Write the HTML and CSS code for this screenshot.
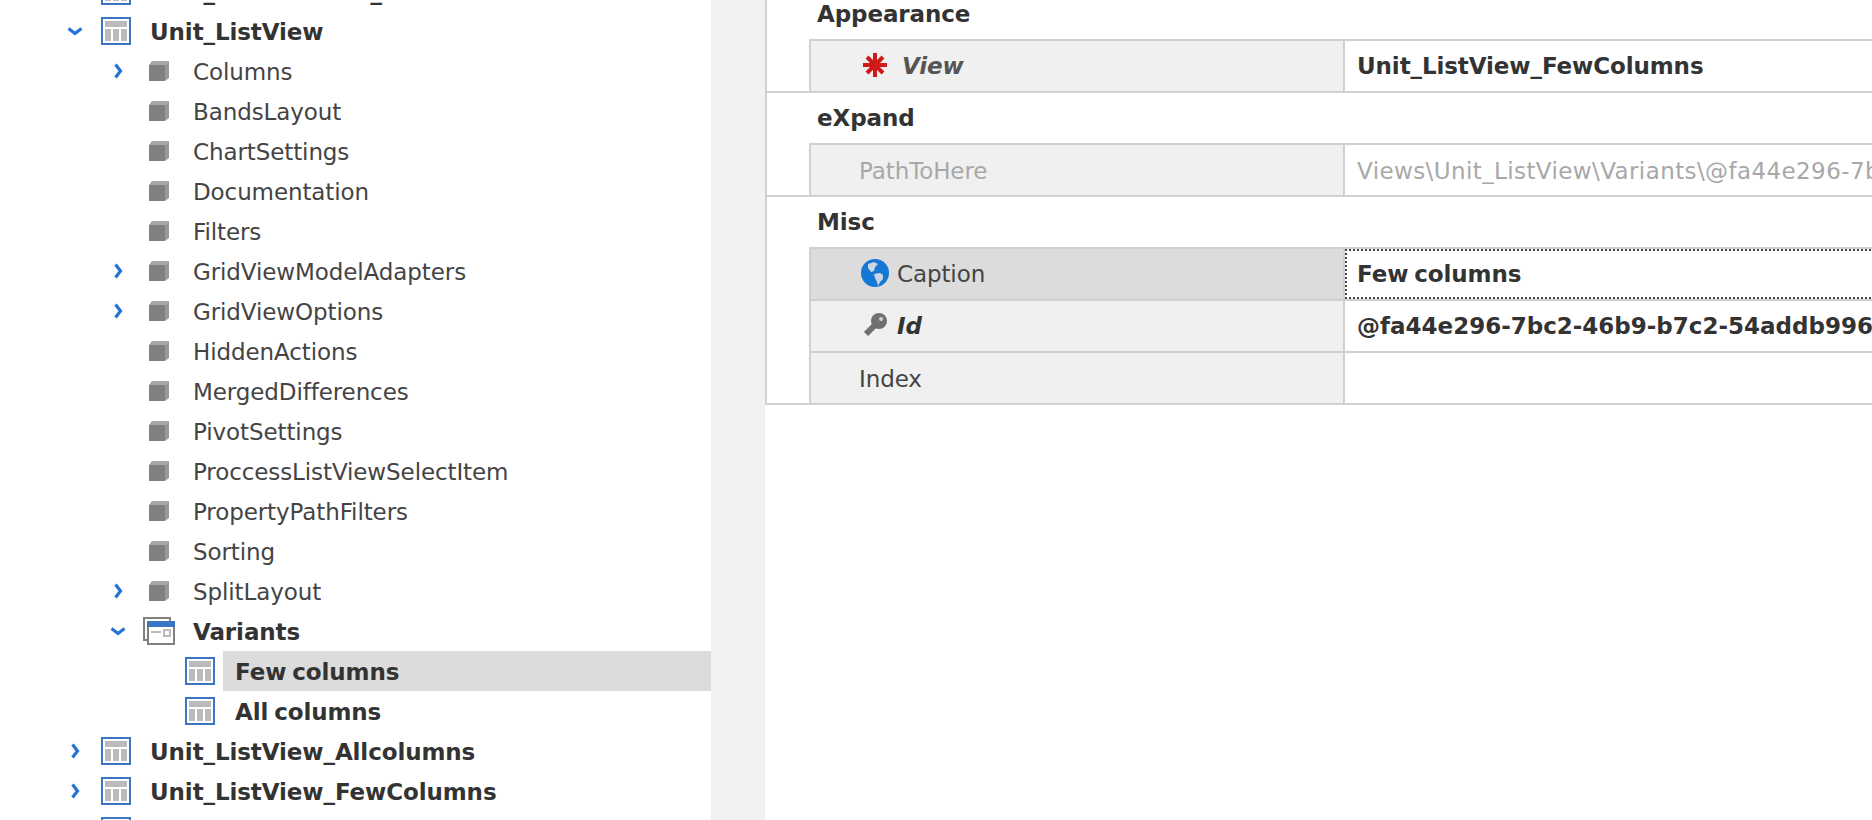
FILE: index.html
```html
<!DOCTYPE html>
<html lang="en">
<head>
  <meta charset="UTF-8">
  <meta name="viewport" content="width=device-width, initial-scale=1.0">
  <title>Model Editor</title>
  <link rel="stylesheet" href="styles.css">
</head>
<body>
  <svg class="defs" width="0" height="0">
    <symbol id="i-list" viewBox="0 0 30 28">
      <rect x="1" y="1" width="28" height="26" fill="#fff" stroke="#3b76c4" stroke-width="2"/>
      <path d="M4 4h22v6H4zM4 12h6v12H4zM12 12h6v12h-6zM20 12h6v12h-6z" fill="#bbb"/>
    </symbol>
    <symbol id="i-cube" viewBox="0 0 20 20">
      <path d="M0 4h16v16H0z" fill="#808080"/>
      <path d="M0 4l3-4h17l-4 4z" fill="#a6a6a6"/>
      <path d="M16 4l4-4v17l-4 3z" fill="#999"/>
    </symbol>
    <symbol id="i-right" viewBox="0 0 10 16">
      <path d="M2.500 1.500l5 6.500-5 6.500" fill="none" stroke="#2573d8" stroke-width="3.200"/>
    </symbol>
    <symbol id="i-down" viewBox="0 0 16 10">
      <path d="M1.500 2.500l6.500 5 6.500-5" fill="none" stroke="#2573d8" stroke-width="3.200"/>
    </symbol>
  </svg>

  <div class="page">
    <div class="tree">
      <div class="node lvl0"><span class="twist"><svg class="chev-r"><use href="#i-right"/></svg></span><span class="ico"><svg class="list"><use href="#i-list"/></svg></span><span class="label bold">Unit_Interactions_ListView</span></div>
      <div class="node lvl0"><span class="twist"><svg class="chev-d"><use href="#i-down"/></svg></span><span class="ico"><svg class="list"><use href="#i-list"/></svg></span><span class="label bold">Unit_ListView</span></div>
      <div class="node lvl1"><span class="twist"><svg class="chev-r"><use href="#i-right"/></svg></span><span class="ico"><svg class="cube"><use href="#i-cube"/></svg></span><span class="label">Columns</span></div>
      <div class="node lvl1"><span class="twist"></span><span class="ico"><svg class="cube"><use href="#i-cube"/></svg></span><span class="label">BandsLayout</span></div>
      <div class="node lvl1"><span class="twist"></span><span class="ico"><svg class="cube"><use href="#i-cube"/></svg></span><span class="label">ChartSettings</span></div>
      <div class="node lvl1"><span class="twist"></span><span class="ico"><svg class="cube"><use href="#i-cube"/></svg></span><span class="label">Documentation</span></div>
      <div class="node lvl1"><span class="twist"></span><span class="ico"><svg class="cube"><use href="#i-cube"/></svg></span><span class="label">Filters</span></div>
      <div class="node lvl1"><span class="twist"><svg class="chev-r"><use href="#i-right"/></svg></span><span class="ico"><svg class="cube"><use href="#i-cube"/></svg></span><span class="label">GridViewModelAdapters</span></div>
      <div class="node lvl1"><span class="twist"><svg class="chev-r"><use href="#i-right"/></svg></span><span class="ico"><svg class="cube"><use href="#i-cube"/></svg></span><span class="label">GridViewOptions</span></div>
      <div class="node lvl1"><span class="twist"></span><span class="ico"><svg class="cube"><use href="#i-cube"/></svg></span><span class="label">HiddenActions</span></div>
      <div class="node lvl1"><span class="twist"></span><span class="ico"><svg class="cube"><use href="#i-cube"/></svg></span><span class="label">MergedDifferences</span></div>
      <div class="node lvl1"><span class="twist"></span><span class="ico"><svg class="cube"><use href="#i-cube"/></svg></span><span class="label">PivotSettings</span></div>
      <div class="node lvl1"><span class="twist"></span><span class="ico"><svg class="cube"><use href="#i-cube"/></svg></span><span class="label">ProccessListViewSelectItem</span></div>
      <div class="node lvl1"><span class="twist"></span><span class="ico"><svg class="cube"><use href="#i-cube"/></svg></span><span class="label">PropertyPathFilters</span></div>
      <div class="node lvl1"><span class="twist"></span><span class="ico"><svg class="cube"><use href="#i-cube"/></svg></span><span class="label">Sorting</span></div>
      <div class="node lvl1"><span class="twist"><svg class="chev-r"><use href="#i-right"/></svg></span><span class="ico"><svg class="cube"><use href="#i-cube"/></svg></span><span class="label">SplitLayout</span></div>
      <div class="node lvl1"><span class="twist"><svg class="chev-d"><use href="#i-down"/></svg></span><span class="ico">
        <svg class="windows" viewBox="0 0 32 28">
          <rect x="1" y="1" width="26" height="22" fill="#fff" stroke="#808080" stroke-width="2"/>
          <rect x="5" y="5" width="26" height="22" fill="#fff" stroke="#808080" stroke-width="2"/>
          <rect x="4" y="4" width="28" height="6" fill="#3b76c4"/>
          <rect x="8" y="14" width="10" height="2" fill="#bbb"/>
          <rect x="21" y="13" width="6" height="6" fill="none" stroke="#bbb" stroke-width="2"/>
        </svg>
      </span><span class="label bold">Variants</span></div>
      <div class="node lvl2"><span class="twist"></span><span class="ico"><svg class="list"><use href="#i-list"/></svg></span><span class="label bold selected">Few columns</span></div>
      <div class="node lvl2"><span class="twist"></span><span class="ico"><svg class="list"><use href="#i-list"/></svg></span><span class="label bold">All columns</span></div>
      <div class="node lvl0"><span class="twist"><svg class="chev-r"><use href="#i-right"/></svg></span><span class="ico"><svg class="list"><use href="#i-list"/></svg></span><span class="label bold">Unit_ListView_Allcolumns</span></div>
      <div class="node lvl0"><span class="twist"><svg class="chev-r"><use href="#i-right"/></svg></span><span class="ico"><svg class="list"><use href="#i-list"/></svg></span><span class="label bold">Unit_ListView_FewColumns</span></div>
      <div class="node lvl0"><span class="twist"></span><span class="ico"><svg class="list"><use href="#i-list"/></svg></span><span class="label bold"></span></div>
    </div>

    <div class="strip"></div>

    <div class="grid">
      <div class="section">
        <div class="head">Appearance</div>
        <div class="props">
          <div class="prop">
            <div class="name name-view">
              <svg class="star" viewBox="0 0 24 24">
                <path d="M12 0v24M0 12h24M4 4l16 16M20 4L4 20" stroke="#d01a1a" stroke-width="4" fill="none"/>
                <circle cx="12" cy="12" r="5" fill="#d01a1a"/>
              </svg>
              <em>View</em>
            </div>
            <div class="value bold">Unit_ListView_FewColumns</div>
          </div>
        </div>
      </div>
      <div class="section">
        <div class="head">eXpand</div>
        <div class="props">
          <div class="prop">
            <div class="name name-plain off">PathToHere</div>
            <div class="value off path">Views\Unit_ListView\Variants\@fa44e296-7bc2-46b9-b7c2-54addb996</div>
          </div>
        </div>
      </div>
      <div class="section">
        <div class="head">Misc</div>
        <div class="props">
          <div class="prop">
            <div class="name name-caption picked">
              <svg class="globe" viewBox="0 0 28 28">
                <circle cx="14" cy="14" r="14" fill="#1577d6"/>
                <path d="M7 5l6-2 4 2-3 3-1 4-3 1-3-4z" fill="#cdd6e0"/>
                <path d="M13 15l6-1 3 2v4l-3 3-2 4-1-4-2-4z" fill="#cdd6e0"/>
              </svg>
              Caption
            </div>
            <div class="value bold focus">Few columns</div>
          </div>
          <div class="prop">
            <div class="name name-id">
              <svg class="key" viewBox="0 0 24 24">
                <circle cx="16" cy="8" r="8" fill="#707070"/>
                <path d="M12 12L3 21" stroke="#707070" stroke-width="6"/>
                <circle cx="18" cy="6" r="2" fill="#d0d0d0"/>
              </svg>
              <em class="bold">Id</em>
            </div>
            <div class="value bold guid">@fa44e296-7bc2-46b9-b7c2-54addb996</div>
          </div>
          <div class="prop">
            <div class="name name-plain">Index</div>
            <div class="value"></div>
          </div>
        </div>
      </div>
    </div>
  </div>
</body>
</html>
```
FILE: styles.css
```css
html, body {
  margin: 0;
  padding: 0;
  height: 100%;
  overflow: hidden;
  background: #fff;
}
body {
  font-family: "DejaVu Sans", Arial, sans-serif;
  font-size: 23px;
  letter-spacing: -0.1px;
  color: #444;
}
.defs {
  display: block;
}
.page {
  display: flex;
  height: 820px;
  overflow: hidden;
}
.bold {
  font-weight: bold;
  word-spacing: -2px;
  color: #333;
}

/* left tree, scrolled a little */
.tree {
  flex: none;
  width: 711px;
  margin-top: -29px;
}
.node {
  display: flex;
  align-items: center;
  height: 40px;
  white-space: nowrap;
}
.lvl0 { padding-left: 65px; }
.lvl1 { padding-left: 108px; }
.lvl2 { padding-left: 149px; }
.twist {
  flex: none;
  width: 20px;
  display: flex;
  justify-content: center;
}
.ico {
  flex: none;
  width: 62px;
  display: flex;
  justify-content: center;
}
.label {
  flex: 1;
  box-sizing: border-box;
  height: 40px;
  line-height: 43px;
  padding-left: 3px;
}
.lvl2 .label {
  margin-left: -8px;
  padding-left: 12px;
}
.selected {
  background: #dcdcdc;
}
.list { width: 30px; height: 28px; }
.cube { width: 20px; height: 20px; }
.chev-r { width: 10px; height: 16px; }
.chev-d { width: 16px; height: 10px; }
.windows { width: 32px; height: 28px; }

.strip {
  flex: none;
  width: 54px;
  background: #f1f1f1;
}

/* property grid */
.grid {
  flex: none;
  width: 1400px;
  align-self: flex-start;
  margin-top: -11px;
  border-left: 2px solid #d0d0d0;
}
.section {
  border-bottom: 2px solid #d0d0d0;
}
.head {
  height: 50px;
  line-height: 51px;
  padding-left: 50px;
  font-weight: bold;
  color: #333;
}
.props {
  margin-left: 42px;
  border-left: 2px solid #d0d0d0;
  border-top: 2px solid #d0d0d0;
}
.prop {
  display: flex;
  height: 50px;
}
.prop + .prop {
  border-top: 2px solid #d0d0d0;
}
.name {
  flex: none;
  box-sizing: border-box;
  width: 534px;
  display: flex;
  align-items: center;
  padding-left: 48px;
  background: #f0f0f0;
  border-right: 2px solid #d0d0d0;
}
.name em {
  font-style: italic;
}
.name-plain { padding-top: 2px; }
.name-view { padding-left: 52px; gap: 15px; }
.name-view em { font-weight: bold; color: #555; }
.name-caption { padding-left: 50px; gap: 8px; }
.name-id { padding-left: 52px; gap: 10px; }
.picked {
  background: #dcdcdc;
}
.value {
  flex: 1;
  box-sizing: border-box;
  padding-left: 12px;
  line-height: 51px;
  white-space: nowrap;
  overflow: hidden;
}
.focus {
  border: 2px dotted #444;
  padding-left: 10px;
  line-height: 47px;
}
.off {
  color: #a8a8a8;
}
.path { letter-spacing: 0.4px; padding-top: 1px; }
.guid { letter-spacing: 0; }
.star, .key { width: 24px; height: 24px; flex: none; margin-top: -2px; }
.globe { width: 28px; height: 28px; flex: none; margin-top: -2px; }
```
